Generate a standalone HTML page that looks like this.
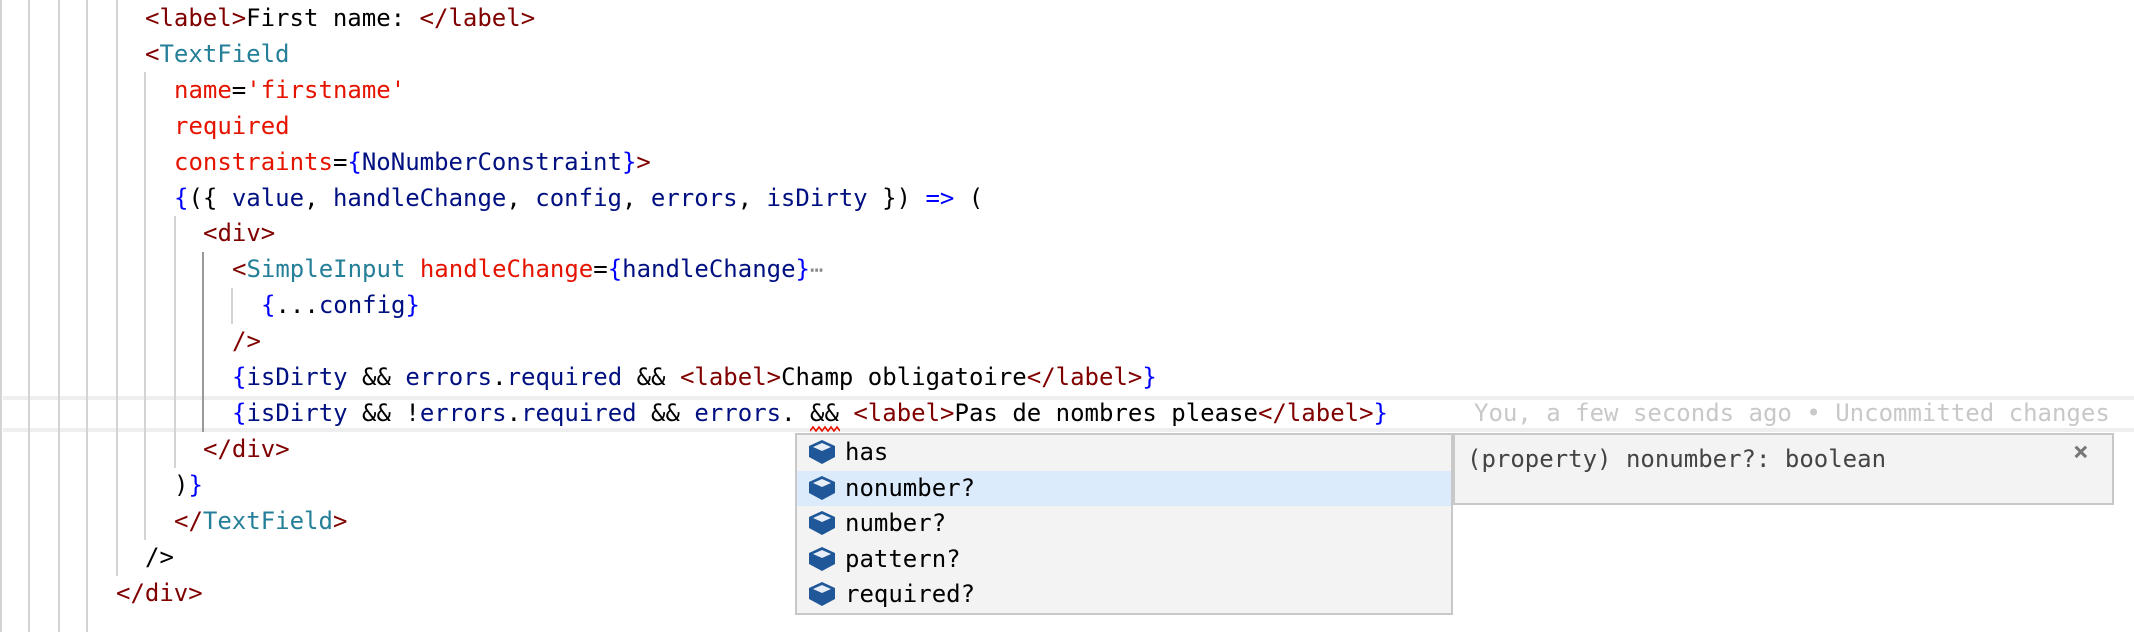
<!DOCTYPE html>
<html><head><meta charset="utf-8"><style>
html,body{margin:0;padding:0;background:#fff;width:2134px;height:632px;overflow:hidden;position:relative}
.g{position:absolute;width:2px;background:#d3d3d3}
.l{position:absolute;left:0;height:36px;line-height:36px;white-space:pre;font-family:"DejaVu Sans Mono","Liberation Mono",monospace;font-size:24px;color:#000}
.t{color:#800000}.c{color:#267f99}.a{color:#e51400}.b{color:#0000ff}.v{color:#001080}
.cur{position:absolute;left:3px;right:0;top:396px;height:28px;border-top:4px solid #eeeeee;border-bottom:4px solid #eeeeee}
.sw{position:absolute;left:795px;top:433px;width:654px;height:178px;background:#f3f3f3;border:2px solid #c8c8c8}
.row{position:absolute;left:0;right:0;height:35.6px;line-height:35.6px;font-family:"DejaVu Sans Mono","Liberation Mono",monospace;font-size:24px;color:#000}
.row svg{position:absolute;left:11px;top:4px}
.row span{position:absolute;left:48px}
.dp{position:absolute;left:1453px;top:433px;width:657px;height:68px;background:#f3f3f3;border:2px solid #c8c8c8;font-family:"DejaVu Sans Mono","Liberation Mono",monospace;font-size:24px;color:#444}
</style></head><body>
<div class="cur"></div>
<div class="g" style="left:0;top:0;height:632px"></div>
<div class="g" style="left:28px;top:0;height:632px"></div>
<div class="g" style="left:58px;top:0;height:632px"></div>
<div class="g" style="left:86px;top:0;height:632px"></div>
<div class="g" style="left:116px;top:0;height:576px"></div>
<div class="g" style="left:144px;top:72px;height:468px"></div>
<div class="g" style="left:174px;top:216px;height:252px"></div>
<div class="g" style="left:202px;top:252px;height:180px;background:#999"></div>
<div class="g" style="left:231px;top:288px;height:36px"></div>

<div class="l" style="top:0;left:145px"><span class="t">&lt;label&gt;</span>First name: <span class="t">&lt;/label&gt;</span></div>
<div class="l" style="top:36px;left:145px"><span class="t">&lt;</span><span class="c">TextField</span></div>
<div class="l" style="top:72px;left:174px"><span class="a">name</span>=<span class="a">'firstname'</span></div>
<div class="l" style="top:108px;left:174px"><span class="a">required</span></div>
<div class="l" style="top:144px;left:174px"><span class="a">constraints</span>=<span class="b">{</span><span class="v">NoNumberConstraint</span><span class="b">}</span><span class="t">&gt;</span></div>
<div class="l" style="top:180px;left:174px"><span class="b">{</span>({ <span class="v">value</span>, <span class="v">handleChange</span>, <span class="v">config</span>, <span class="v">errors</span>, <span class="v">isDirty</span> }) <span class="b">=&gt;</span> (</div>
<div class="l" style="top:215px;left:203px"><span class="t">&lt;div&gt;</span></div>
<div class="l" style="top:251px;left:232px"><span class="t">&lt;</span><span class="c">SimpleInput</span> <span class="a">handleChange</span>=<span class="b">{</span><span class="v">handleChange</span><span class="b">}</span><span style="color:#888;font-size:22px">⋯</span></div>
<div class="l" style="top:287px;left:261px"><span class="b">{</span>...<span class="v">config</span><span class="b">}</span></div>
<div class="l" style="top:323px;left:232px"><span class="t">/&gt;</span></div>
<div class="l" style="top:359px;left:232px"><span class="b">{</span><span class="v">isDirty</span> &amp;&amp; <span class="v">errors</span>.<span class="v">required</span> &amp;&amp; <span class="t">&lt;label&gt;</span>Champ obligatoire<span class="t">&lt;/label&gt;</span><span class="b">}</span></div>
<div class="l" style="top:395px;left:232px"><span class="b">{</span><span class="v">isDirty</span> &amp;&amp; !<span class="v">errors</span>.<span class="v">required</span> &amp;&amp; <span class="v">errors</span>. &amp;&amp; <span class="t">&lt;label&gt;</span>Pas de nombres please<span class="t">&lt;/label&gt;</span><span class="b">}</span></div>
<div class="l" style="top:395px;left:1474px;color:#c8c8c8">You, a few seconds ago • Uncommitted changes</div>
<svg style="position:absolute;left:810px;top:425px" width="30" height="8"><path d="M0 6 L3 2 L6 6 L9 2 L12 6 L15 2 L18 6 L21 2 L24 6 L27 2 L30 6" stroke="#e51400" stroke-width="1.6" fill="none"/></svg>
<div class="l" style="top:431px;left:203px"><span class="t">&lt;/div&gt;</span></div>
<div class="l" style="top:467px;left:174px">)<span class="b">}</span></div>
<div class="l" style="top:503px;left:174px"><span class="t">&lt;/</span><span class="c">TextField</span><span class="t">&gt;</span></div>
<div class="l" style="top:539px;left:145px">/&gt;</div>
<div class="l" style="top:575px;left:116px"><span class="t">&lt;/div&gt;</span></div>

<div class="sw">
<div class="row" style="top:0"><svg width="28" height="26" viewBox="0 0 28 26"><path d="M14 1 L27 7 L27 18 L14 25 L1 18 L1 7 Z" fill="#1f5799"/><path d="M14 4 L23 8 L14 12 L5 8 Z" fill="#e8eef7"/></svg><span>has</span></div>
<div class="row" style="top:35.6px;background:#dcebfc"><svg width="28" height="26" viewBox="0 0 28 26"><path d="M14 1 L27 7 L27 18 L14 25 L1 18 L1 7 Z" fill="#1f5799"/><path d="M14 4 L23 8 L14 12 L5 8 Z" fill="#e8eef7"/></svg><span>nonumber?</span></div>
<div class="row" style="top:71.2px"><svg width="28" height="26" viewBox="0 0 28 26"><path d="M14 1 L27 7 L27 18 L14 25 L1 18 L1 7 Z" fill="#1f5799"/><path d="M14 4 L23 8 L14 12 L5 8 Z" fill="#e8eef7"/></svg><span>number?</span></div>
<div class="row" style="top:106.8px"><svg width="28" height="26" viewBox="0 0 28 26"><path d="M14 1 L27 7 L27 18 L14 25 L1 18 L1 7 Z" fill="#1f5799"/><path d="M14 4 L23 8 L14 12 L5 8 Z" fill="#e8eef7"/></svg><span>pattern?</span></div>
<div class="row" style="top:142.4px"><svg width="28" height="26" viewBox="0 0 28 26"><path d="M14 1 L27 7 L27 18 L14 25 L1 18 L1 7 Z" fill="#1f5799"/><path d="M14 4 L23 8 L14 12 L5 8 Z" fill="#e8eef7"/></svg><span>required?</span></div>
</div>
<div class="dp"><span style="position:absolute;left:12px;top:6px;line-height:36px">(property) nonumber?: boolean</span><span style="position:absolute;left:618px;top:2px;line-height:30px;color:#777;font-size:26px;font-weight:bold">×</span></div>
</body></html>
